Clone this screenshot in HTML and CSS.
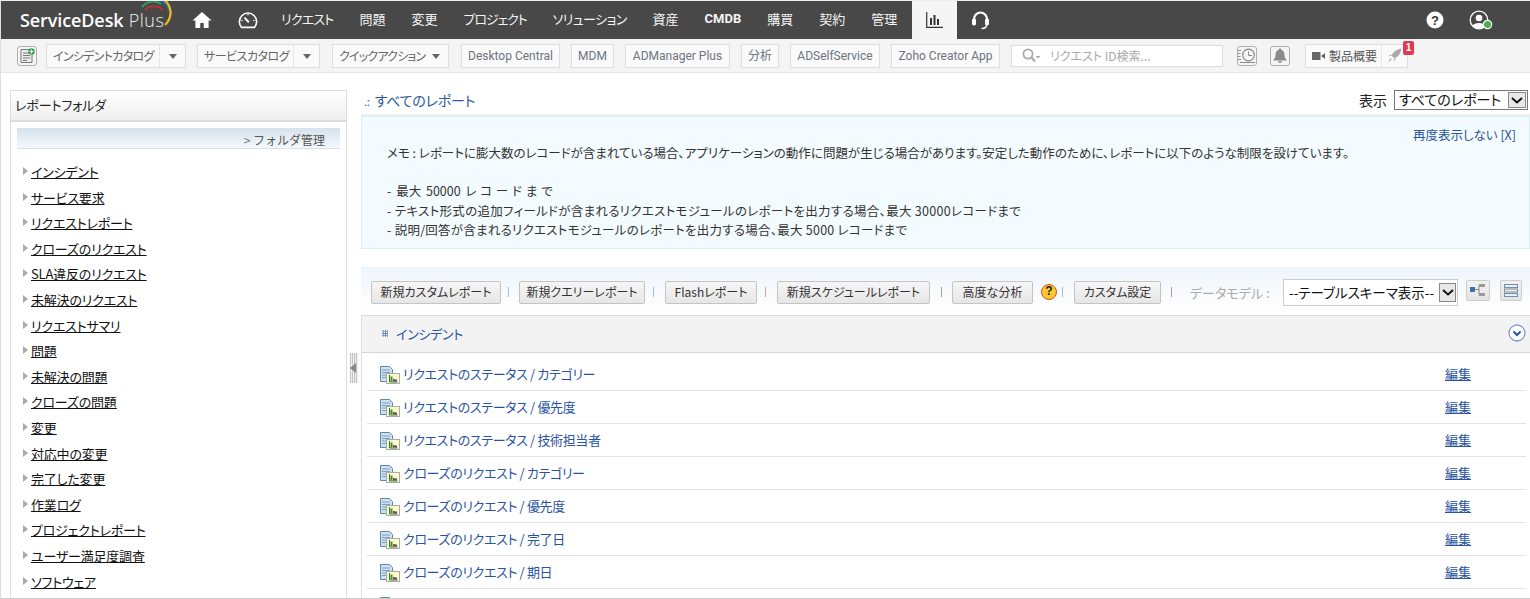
FILE: index.html
```html
<!DOCTYPE html>
<html lang="ja">
<head>
<meta charset="utf-8">
<title>ServiceDesk Plus</title>
<link rel="stylesheet" href="styles.css">
</head>
<body>
<div class="page">
  <header class="nav">
    <div class="logo"><b>ServiceDesk</b> Plus
      <svg class="logo-arc" width="36" height="30" viewBox="0 0 36 30" fill="none" stroke-width="2">
        <path d="M3 9C8 3 16 2 22 6" stroke="#2f9e5b"/>
        <path d="M6 12C11 7 19 7 24 12" stroke="#b5323a"/>
        <path d="M12 3C20 0 29 5 30 13" stroke="#2468a8"/>
        <path d="M24 1C32 6 35 18 26 27" stroke="#e6b820" stroke-width="2.4"/>
      </svg>
    </div>
    <a class="nav-ico"><svg width="20" height="18" viewBox="0 0 20 18"><path d="M10 1 0.5 9.6h2.9V17h4.9v-5h3.4v5h4.9V9.6h2.9z" fill="#fff"/></svg></a>
    <a class="nav-ico gauge"><svg width="20" height="18" viewBox="0 0 20 18" fill="none" stroke="#fff" stroke-width="1.6"><path d="M3.6 16.4A8.6 8.6 0 1 1 16.4 16.4z"/><path d="M10.8 11.2 6.5 6.6" stroke-width="2"/><path d="M10 3v1.5M3.4 9.5h1.4M15.2 9.5h1.4" stroke-width="1"/></svg></a>
    <a class="nav-item k1">リクエスト</a>
    <a class="nav-item">問題</a>
    <a class="nav-item">変更</a>
    <a class="nav-item k2">プロジェクト</a>
    <a class="nav-item k3">ソリューション</a>
    <a class="nav-item">資産</a>
    <a class="nav-item nav-bold">CMDB</a>
    <a class="nav-item">購買</a>
    <a class="nav-item">契約</a>
    <a class="nav-item">管理</a>
    <a class="nav-active"><svg width="17" height="16" viewBox="0 0 17 16" fill="none" stroke="#333"><path d="M.7 0v15.3H17" stroke-width="1.2"/><path d="M5 6v7M8.5 3v10M12 7v6" stroke-width="2"/></svg></a>
    <a class="nav-head"><svg width="17" height="19" viewBox="0 0 17 19" fill="none" stroke="#fff"><path d="M2 11V8a6.5 6.5 0 0 1 13 0v3" stroke-width="2.2"/><rect x="0.5" y="8" width="3" height="6" rx="1" fill="#fff"/><rect x="13.5" y="8" width="3" height="6" rx="1" fill="#fff"/><path d="M14.5 14c0 2.500-2 3.500-5 3.500" stroke-width="1.500"/></svg></a>
    <div class="nav-right">
      <svg width="18" height="18" viewBox="0 0 18 18"><circle cx="9" cy="9" r="8.500" fill="#fff"/><text x="9" y="13.500" text-anchor="middle" class="q-mark">?</text></svg>
      <svg class="user" width="24" height="20" viewBox="0 0 24 20"><circle cx="10" cy="10" r="8.800" fill="none" stroke="#fff" stroke-width="1.300"/><circle cx="10" cy="8" r="3.300" fill="#fff"/><path d="M3.500 16c1-4 12-4 13 0-3 3.500-10 3.500-13 0z" fill="#fff"/><circle cx="18.500" cy="14.500" r="4.200" fill="#4caf50" stroke="#fff" stroke-width="1.200"/></svg>
    </div>
  </header>

  <div class="tools">
    <span class="tool-sq first"><svg width="16" height="16" viewBox="0 0 16 16"><path d="M2 1.500h8l3 3v10H2z" fill="#eee" stroke="#777"/><path d="M4 5h6M4 7.500h7M4 10h7M4 12.500h4" stroke="#777"/><circle cx="12.500" cy="3.500" r="3.300" fill="#35a853"/><path d="M12.500 1.500v4M10.500 3.500h4" stroke="#fff"/></svg></span>
    <span class="tool-drop w-a"><span class="drop-txt">インシデントカタログ</span><span class="drop-arrow"></span></span>
    <span class="tool-drop w-b"><span class="drop-txt">サービスカタログ</span><span class="drop-arrow"></span></span>
    <span class="tool-drop w-c"><span class="drop-txt plain">クイックアクション</span><span class="drop-arrow plain"></span></span>
    <a class="tool-btn t1">Desktop Central</a>
    <a class="tool-btn t2">MDM</a>
    <a class="tool-btn t3">ADManager Plus</a>
    <a class="tool-btn t4">分析</a>
    <a class="tool-btn t5">ADSelfService</a>
    <a class="tool-btn t6">Zoho Creator App</a>
    <div class="search">
      <svg width="19" height="15" viewBox="0 0 19 15" fill="none" stroke="#aaa"><circle cx="6" cy="6" r="4.600" stroke-width="1.800"/><path d="M9.500 9.500 13 13.500" stroke-width="2.200"/><path d="M13.500 8h5l-2.500 2.500z" fill="#aaa" stroke="none"/></svg>
      <span>リクエスト ID検索...</span>
    </div>
    <span class="tool-sq hist"><svg width="18" height="16" viewBox="0 0 18 16" fill="none" stroke="#888"><circle cx="10.500" cy="7" r="5.800" stroke-width="1.200"/><path d="M10.500 3.500V7.500H14"/><path d="M0 2.500h3M0 5.500h2.500M0 8.500h2.500M0 11.500h3M2 14.500h15"/></svg></span>
    <span class="tool-sq bell"><svg width="14" height="15" viewBox="0 0 14 15"><path d="M7 0.500c.8 0 1.200.6 1.200 1.300C10.500 2.400 11.500 4.500 11.500 7c0 2 .7 3.500 2 4.700v.8H.5v-.8C1.800 10.500 2.500 9 2.500 7c0-2.500 1-4.600 3.300-5.200C5.800 1.100 6.200.5 7 .5z" fill="#8a8a8a"/><path d="M5 13.300h4c0 1-1 1.700-2 1.700s-2-.7-2-1.700z" fill="#8a8a8a"/></svg></span>
    <div class="product">
      <span class="prod-main"><svg width="13" height="8" viewBox="0 0 13 8"><rect width="8.500" height="8" fill="#666"/><path d="M9 4l4-3v6z" fill="#666"/></svg>製品概要</span>
      <span class="prod-rocket"><svg width="15" height="15" viewBox="0 0 15 15"><path d="M14.500.5C10 1 6.500 3.500 4.500 7.500l3 3C11.500 8.500 14 5 14.500.5z" fill="#aaa"/><path d="M4.500 7.500 1.500 8.500 4 6zM7.500 10.500l-1 3 2.500-2.500z" fill="#aaa"/><path d="M3.500 10 .5 14.500 5 11.500z" fill="#bbb"/></svg></span>
      <span class="badge">1</span>
    </div>
  </div>

  <div class="content">
    <aside class="side">
      <div class="side-head">レポートフォルダ</div>
      <div class="side-manage"><span class="gt">&gt;</span> フォルダ管理</div>
      <ul class="tree">
        <li><a>インシデント</a></li>
        <li><a>サービス要求</a></li>
        <li><a>リクエストレポート</a></li>
        <li><a>クローズのリクエスト</a></li>
        <li><a>SLA違反のリクエスト</a></li>
        <li><a>未解決のリクエスト</a></li>
        <li><a>リクエストサマリ</a></li>
        <li><a>問題</a></li>
        <li><a>未解決の問題</a></li>
        <li><a>クローズの問題</a></li>
        <li><a>変更</a></li>
        <li><a>対応中の変更</a></li>
        <li><a>完了した変更</a></li>
        <li><a>作業ログ</a></li>
        <li><a>プロジェクトレポート</a></li>
        <li><a>ユーザー満足度調査</a></li>
        <li><a>ソフトウェア</a></li>
      </ul>
    </aside>
    <div class="split"><span class="grip"><i></i></span></div>
    <main class="main">
      <div class="crumb-row">
        <span class="crumb"><span class="dots">.:</span> すべてのレポート</span>
        <span class="show"><label>表示</label>
          <span class="fake-select show-sel"><span class="sel-txt">すべてのレポート</span><span class="sel-btn"><svg width="12" height="7" viewBox="0 0 12 7" fill="none" stroke="#111" stroke-width="2"><path d="M1 1l5 4.500L11 1"/></svg></span></span>
        </span>
      </div>
      <section class="memo">
        <div class="memo-close">再度表示しない [X]</div>
        <p class="memo-line">メモ : レポートに膨大数のレコードが含まれている場合、アプリケーションの動作に問題が生じる場合があります。安定した動作のために、レポートに以下のような制限を設けています。</p>
        <ul class="memo-list">
          <li class="m1">- 最大 50000 <span class="wide">レコードまで</span></li>
          <li class="m2">- テキスト形式の追加フィールドが含まれるリクエストモジュールのレポートを出力する場合、最大 30000レコードまで</li>
          <li class="m3">- 説明/回答が含まれるリクエストモジュールのレポートを出力する場合、最大 5000 レコードまで</li>
        </ul>
      </section>
      <div class="actions">
        <button class="act b1">新規カスタムレポート</button><i class="sep s1"></i>
        <button class="act b2">新規クエリーレポート</button><i class="sep s2"></i>
        <button class="act b3">Flashレポート</button><i class="sep s3 red"></i>
        <button class="act b4">新規スケジュールレポート</button><i class="sep s4 tan"></i>
        <button class="act b5">高度な分析</button>
        <span class="help">?</span><i class="sep s5"></i>
        <button class="act b6">カスタム設定</button><i class="sep s6 tan"></i>
        <span class="dm">データモデル :</span>
        <span class="fake-select dm-sel"><span class="sel-txt">--テーブルスキーマ表示--</span><span class="sel-btn"><svg width="12" height="7" viewBox="0 0 12 7" fill="none" stroke="#111" stroke-width="2"><path d="M1 1l5 4.500L11 1"/></svg></span></span>
        <span class="sq-btn"><svg width="16" height="12" viewBox="0 0 16 12"><rect y="3" width="5" height="5" fill="#3b6fb0"/><path d="M5 5.500h4M9 1.500v9" stroke="#888"/><rect x="9" y="0" width="6" height="3" fill="#999"/><rect x="9" y="9" width="6" height="3" fill="#999"/></svg></span>
        <span class="sq-btn narrow"><svg width="14" height="13" viewBox="0 0 14 13"><rect x=".5" y=".5" width="13" height="3" fill="#e8eef5" stroke="#6f8fb8"/><rect x=".5" y="5" width="13" height="3" fill="#e8eef5" stroke="#888"/><rect x=".5" y="9.500" width="13" height="3" fill="#e8eef5" stroke="#6f8fb8"/></svg></span>
      </div>
      <section class="panel">
        <div class="panel-head">
          <span class="grid-dots"></span>
          <span class="panel-title">インシデント</span>
          <svg class="collapse" width="18" height="18" viewBox="0 0 18 18" fill="none"><circle cx="9" cy="9" r="8" fill="#fff" stroke="#7d9ccd" stroke-width="1.300"/><path d="M5.500 7.500 9 11l3.500-3.500" stroke="#2a539f" stroke-width="2"/></svg>
        </div>
        <svg class="defs" width="0" height="0"><defs><symbol id="rep" viewBox="0 0 20 18"><path d="M.5.500h9l3 3v12H.5z" fill="#cfe0f0" stroke="#5f88ad"/><path d="M2 4h8M2 6.500h8M2 9h5M2 11.500h5" stroke="#7aa0c4"/><rect x="6.500" y="7.500" width="13" height="10" fill="#fdfbc8" stroke="#aaa"/><path d="M9.500 9v7h8" fill="none" stroke="#2d7d3a"/><rect x="10.500" y="10.500" width="2" height="5" fill="#2a9a3f"/><rect x="13" y="13" width="2" height="2.500" fill="#c8352c"/><rect x="15" y="13.500" width="2" height="2" fill="#2a4fb0"/></symbol></defs></svg>
        <ul class="rows">
          <li><svg class="rep" width="20" height="18"><use href="#rep"/></svg><a class="r-name">リクエストのステータス / カテゴリー</a><a class="edit">編集</a></li>
          <li><svg class="rep" width="20" height="18"><use href="#rep"/></svg><a class="r-name">リクエストのステータス / 優先度</a><a class="edit">編集</a></li>
          <li><svg class="rep" width="20" height="18"><use href="#rep"/></svg><a class="r-name">リクエストのステータス / 技術担当者</a><a class="edit">編集</a></li>
          <li><svg class="rep" width="20" height="18"><use href="#rep"/></svg><a class="r-name">クローズのリクエスト / カテゴリー</a><a class="edit">編集</a></li>
          <li><svg class="rep" width="20" height="18"><use href="#rep"/></svg><a class="r-name">クローズのリクエスト / 優先度</a><a class="edit">編集</a></li>
          <li><svg class="rep" width="20" height="18"><use href="#rep"/></svg><a class="r-name">クローズのリクエスト / 完了日</a><a class="edit">編集</a></li>
          <li><svg class="rep" width="20" height="18"><use href="#rep"/></svg><a class="r-name">クローズのリクエスト / 期日</a><a class="edit">編集</a></li>
          <li><svg class="rep" width="20" height="18"><use href="#rep"/></svg></li>
        </ul>
      </section>
    </main>
  </div>
</div>
</body>
</html>
```
FILE: styles.css
```css
* { box-sizing: border-box; }
html, body { margin: 0; padding: 0; height: 100%; overflow: hidden; background: #fff; }
body {
  font-family: "Noto Sans CJK JP", "Liberation Sans", sans-serif;
  font-size: 12px;
  font-feature-settings: "palt";
  color: #333;
}
a { text-decoration: none; color: inherit; }
ul { list-style: none; margin: 0; padding: 0; }
p { margin: 0; }

.page {
  width: 1530px; height: 599px; overflow: hidden;
  display: flex; flex-direction: column;
  border-top: 1px solid #eee; border-left: 1px solid #ddd; border-bottom: 1px solid #ccc;
}

/* top navigation */
.nav {
  height: 38px; flex: none; background: #484848; color: #fff;
  display: flex; align-items: center;
}
.logo {
  position: relative; width: 178px; padding-left: 19px; flex: none;
  font: 300 18px "Open Sans", sans-serif; color: #eee; white-space: nowrap; letter-spacing: .5px;
}
.logo b { font-weight: 600; color: #fff; letter-spacing: -.1px; }
.logo-arc { position: absolute; left: 138px; top: -10px; }
.nav-ico { width: 46px; flex: none; display: flex; justify-content: center; }
.nav-ico.gauge { margin-right: -3px; }
.nav-item { padding: 0 13px; font-size: 13px; color: #f4f4f4; white-space: nowrap; line-height: 38px; margin-top: -3px; }
.k1 { letter-spacing: -.8px; }
.k2 { letter-spacing: -1.1px; }
.k3 { letter-spacing: -.6px; }
.nav-bold { font: 700 13px "Roboto", sans-serif; }
.nav-active {
  width: 45px; height: 38px; margin-left: 2px; background: #f5f5f5; flex: none;
  display: flex; align-items: center; justify-content: center;
}
.nav-head { width: 46px; flex: none; display: flex; justify-content: center; }
.nav-right { margin-left: auto; display: flex; align-items: center; gap: 25px; padding-right: 37px; }
.q-mark { font: 700 13px "Liberation Sans", sans-serif; fill: #333; }

/* toolbar */
.tools {
  height: 34px; flex: none; background: #f4f4f4; border-bottom: 1px solid #e6e6e6;
  display: flex; align-items: center; gap: 11px; padding-left: 16px; color: #666;
}
.tool-sq {
  width: 20px; height: 20px; flex: none; border: 1px solid #b0b0b0; border-radius: 3px; background: #f5f5f5;
  display: flex; align-items: center; justify-content: center;
}
.tool-sq.first { margin-right: -2px; }
.tool-drop {
  height: 24px; display: flex; align-items: stretch; background: #fafafa; border: 1px solid #ddd; flex: none;
}
.drop-txt { flex: 1; min-width: 0; padding-left: 6px; line-height: 21px; border-right: 1px solid #e6e6e6; white-space: nowrap; }
.drop-txt.plain { border-right: 0; }
.drop-arrow { width: 25px; flex: none; position: relative; }
.drop-arrow::after {
  content: ""; position: absolute; left: 9px; top: 9px;
  border: 4px solid transparent; border-top: 5px solid #666; border-bottom: 0;
}
.w-a { width: 140px; }
.w-a .drop-txt { letter-spacing: -.7px; }
.w-b { width: 123px; }
.w-b .drop-txt { letter-spacing: -.5px; }
.w-c { width: 117px; margin-left: 1px; }
.w-c .drop-txt { letter-spacing: -.8px; }
.tool-btn {
  height: 24px; text-align: center; line-height: 22px; background: #fafafa; border: 1px solid #ddd; flex: none;
  font-family: "Roboto", "Noto Sans CJK JP", sans-serif; color: #6b7480; font-size: 12px; white-space: nowrap;
}
.t1 { width: 99px; margin-left: 1px; } .t2 { width: 43px; } .t3 { width: 105px; } .t4 { width: 38px; } .t5 { width: 90px; } .t6 { width: 109px; }
.search {
  width: 212px; height: 22px; background: #fff; border: 1px solid #ddd; flex: none;
  display: flex; align-items: center; gap: 9px; padding-left: 10px; color: #aaa; line-height: 20px;
}
.tool-sq.hist { margin-left: 3px; margin-right: 2px; }
.tool-sq.bell { margin-right: 4px; }
.product {
  position: relative; width: 103px; height: 24px; background: #fafafa; border: 1px solid #ddd; flex: none;
  display: flex; align-items: center;
}
.prod-main { flex: 1; display: flex; align-items: center; gap: 4px; padding-left: 6px; height: 100%; color: #555; line-height: 20px; border-right: 1px solid #e8e8e8; }
.prod-rocket { width: 25px; display: flex; justify-content: center; }
.badge {
  position: absolute; right: -7px; top: -4px; width: 11px; height: 14px; background: #e5384d; color: #fff; border-radius: 2px;
  font: 700 10px/14px "Liberation Sans", sans-serif; text-align: center;
}

/* body */
.content { flex: 1; min-height: 0; display: flex; align-items: flex-start; padding-top: 17px; padding-left: 9px; }
.side { width: 337px; height: 600px; flex: none; border: 1px solid #ddd; }
.side-head {
  height: 31px; padding-left: 4px; line-height: 27px; font-size: 13px; color: #222; letter-spacing: -.1px;
  background: linear-gradient(#fff, #efefef); border-bottom: 2px solid #ddd;
}
.side-manage {
  margin: 6px 6px 0; height: 21px; padding-right: 15px; text-align: right; line-height: 23px; color: #555; font-size: 12px;
  font-feature-settings: normal;
  background: linear-gradient(#d6e2ec, #f3f8fd); border-bottom: 1px solid #d8e2ea;
}
.gt { color: #777; }
.tree { padding: 10px 0 0 20px; }
.tree li { height: 25.600px; line-height: 25.600px; position: relative; font-size: 13px; letter-spacing: -.2px; }
.tree li::before {
  content: ""; position: absolute; left: -8px; top: 8px;
  border: 4px solid transparent; border-left: 5px solid #aaa; border-right: 0;
}
.tree a { color: #111; text-decoration: underline; }

.split { width: 14px; flex: none; height: 300px; position: relative; }
.grip { position: absolute; left: 3px; top: 263px; width: 8px; height: 30px; background: repeating-linear-gradient(90deg, #c4c4c4 0 1px, #f0f0f0 1px 2px); }
.grip i { position: absolute; left: 0; top: 10px; border: 5px solid transparent; border-right: 6px solid #888; border-left: 0; }

.main { flex: 1; min-width: 0; display: flex; flex-direction: column; }
.crumb-row { height: 26px; display: flex; align-items: flex-start; justify-content: space-between; }
.crumb { color: #2a5a9c; font-size: 14px; line-height: 20px; padding-left: 3px; letter-spacing: -.2px; }
.dots { font-size: 11px; margin-right: 2px; }
.show { display: flex; align-items: center; gap: 7px; padding-right: 2px; color: #222; font-size: 14px; }
.fake-select { display: flex; background: #fff; border: 1px solid #777; align-items: stretch; }
.show-sel { width: 134px; height: 20px; }
.sel-txt { flex: 1; min-width: 0; padding-left: 4px; color: #111; white-space: nowrap; font-size: 14px; line-height: 17px; }
.sel-btn { width: 18px; margin: 1px; flex: none; background: #e8e8e8; border: 1px solid #888; display: flex; align-items: center; justify-content: center; }

.memo {
  height: 133px; background: #f3fbfe; border: 1px solid #d5f0fa; box-shadow: 0 -2px 0 #eee; padding-left: 25px; position: relative; flex: none;
  color: #333; font-size: 12.500px;
}
.memo-close { position: absolute; right: 13px; top: 8px; color: #2a539f; }
.memo-line { padding-top: 26px; line-height: 20px; white-space: nowrap; }
.memo-list { padding-top: 18px; }
.memo-list li { height: 19.500px; line-height: 19.500px; white-space: nowrap; }
.m1 { word-spacing: 2px; }
.wide { letter-spacing: 3.800px; }
.m2 { letter-spacing: .3px; }
.m3 { letter-spacing: .25px; }

.actions {
  margin-top: 18px; height: 48px; flex: none; display: flex; align-items: center; padding-left: 10px; padding-top: 2px;
  background: linear-gradient(#eef5fc, #fff 90%);
}
.act {
  height: 23px; padding: 0; border: 1px solid #c4c4c4; border-radius: 2px; background: linear-gradient(#f6f6f6, #e6e6e6);
  font: 12px "Noto Sans CJK JP", sans-serif; font-feature-settings: "palt"; color: #333; white-space: nowrap; flex: none; line-height: 20px;
}
.b1 { width: 130px; } .b2 { width: 126px; } .b3 { width: 92px; } .b4 { width: 153px; } .b5 { width: 81px; } .b6 { width: 87px; }
.sep { width: 1px; height: 10px; background: #9fc0de; flex: none; }
.sep.red { background: #e0a090; } .sep.tan { background: #b0a090; }
.s1 { margin: 0 10px 0 7px; } .s2 { margin: 0 11px 0 8px; } .s3 { margin: 0 11px 0 8px; } .s4 { margin: 0 10px 0 11px; }
.s5 { margin: 0 11px 0 5px; } .s6 { margin: 0 0 0 10px; }
.help {
  width: 16px; height: 16px; margin-left: 8px; border-radius: 50%; background: #fdc92e; border: 1.500px solid #e0491c; flex: none;
  font: 700 12px/13px "Liberation Sans", sans-serif; color: #222; text-align: center;
}
.dm { margin-left: 18px; width: 93px; color: #aaa; flex: none; white-space: nowrap; font-size: 13px; }
.dm-sel { width: 175px; height: 27px; border-color: #ccc; flex: none; }
.dm-sel .sel-txt { line-height: 25px; font-size: 13.500px; padding-left: 5px; }
.dm-sel .sel-btn { width: 17px; margin: 3px 1px 3px 0; }
.sq-btn {
  width: 24px; height: 21px; margin-left: 8px; margin-top: -4px; flex: none; background: linear-gradient(#f2f2f2, #e4e4e4); border: 1px solid #ccc; border-radius: 2px;
  display: flex; align-items: center; justify-content: center;
}
.sq-btn.narrow { width: 22px; margin-left: 10px; }

.panel { border-left: 1px solid #ddd; flex: none; }
.panel-head {
  height: 38px; background: #f3f3f3; border-top: 1px solid #ddd; border-bottom: 1px solid #d2d6dc;
  display: flex; align-items: center; padding-left: 20px; position: relative;
}
.grid-dots { width: 6px; height: 7px; background-image: radial-gradient(#5f86bb .9px, transparent 1px); background-size: 2.300px 2.300px; margin-right: 8px; margin-top: -2px; }
.panel-title { color: #2a539f; font-size: 13px; letter-spacing: -.3px; margin-top: -2px; }
.collapse { position: absolute; right: 4px; top: 8px; }
.defs { position: absolute; }
.rows { padding: 5px 4px 0 5px; }
.rows li {
  height: 33px; display: flex; align-items: center; border-bottom: 1px solid #e4e4e4; padding: 0 55px 2px 13px;
}
.rep { flex: none; margin: 3px 3px 0 0; }
.r-name { flex: 1; color: #2a539f; font-size: 13px; white-space: nowrap; letter-spacing: -.35px; }
.edit { color: #2a539f; text-decoration: underline; font-size: 13px; }
```
